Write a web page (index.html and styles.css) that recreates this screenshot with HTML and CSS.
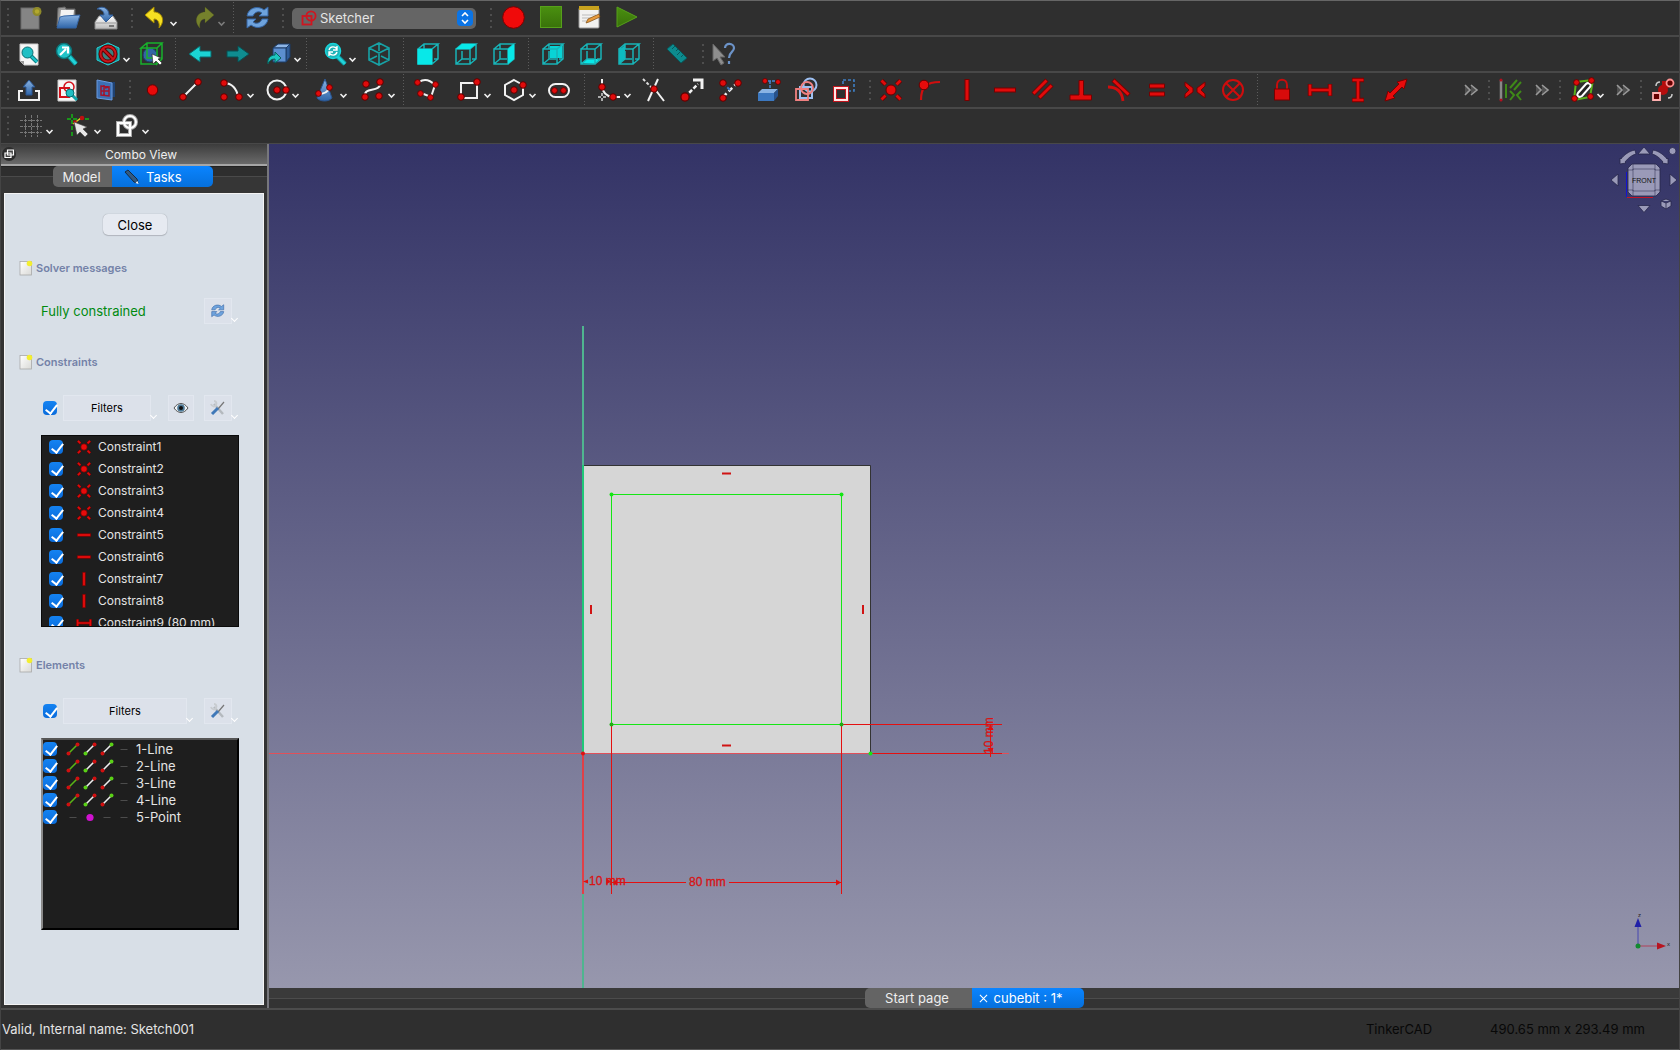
FILE: index.html
```html
<!DOCTYPE html>
<html lang="en">
<head>
<meta charset="utf-8">
<title>cubebit : 1* – Sketcher</title>
<link rel="stylesheet" href="styles.css">
</head>
<body>
<svg class="symbols" aria-hidden="true">
  <defs>
    <linearGradient id="g-blue" x1="0" y1="0" x2="0" y2="1"><stop offset="0" stop-color="#8ab4e4"/><stop offset="1" stop-color="#2f65a8"/></linearGradient>
    <linearGradient id="g-grey" x1="0" y1="0" x2="0" y2="1"><stop offset="0" stop-color="#fff"/><stop offset="1" stop-color="#b9b9b9"/></linearGradient>
    <linearGradient id="g-page" x1="0" y1="0" x2="1" y2="1"><stop offset="0" stop-color="#fff"/><stop offset="1" stop-color="#d9d9d6"/></linearGradient>
    <linearGradient id="g-green" x1="0" y1="0" x2="0" y2="1"><stop offset="0" stop-color="#4a9010"/><stop offset="1" stop-color="#39720a"/></linearGradient>
  </defs>
  <symbol id="node" viewBox="0 0 8 8"><circle cx="4" cy="4" r="3.3" fill="#e00b0b" stroke="#5c0000"/></symbol>
  <symbol id="chev" viewBox="0 0 9 9"><path d="M1.500 3l3 3 3-3" fill="none" stroke="#eee" stroke-width="1.600"/></symbol>
  <symbol id="i-new" viewBox="0 0 28 28"><rect x="4" y="4" width="18" height="21" fill="#858585" stroke="#6c6c6c"/><circle cx="20" cy="7.500" r="4.500" fill="#8f8a2a"/><circle cx="20" cy="7.500" r="2.200" fill="#b3a92f"/></symbol>
  <symbol id="i-open" viewBox="0 0 28 28"><path d="M2 22L3 4l7-1 1 2h9v14z" fill="#9a9a9a" stroke="#666"/><path d="M6 6h13l-1 8H5z" fill="#f3f3f3"/><path d="M5 13l4-1 16-1-4 13H2z" fill="url(#g-blue)" stroke="#3565a4"/></symbol>
  <symbol id="i-save" viewBox="0 0 28 28"><path d="M6 12h14l4 6v7H2v-7z" fill="url(#g-grey)" stroke="#888"/><path d="M3 19h20" stroke="#999"/><path d="M16 22h5" stroke="#777" stroke-width="2"/><path d="M4 5c5-4 12-1 12 6h4l-7 7-6-7h4c0-4-3-6-7-6z" fill="url(#g-blue)" stroke="#2f5c99"/></symbol>
  <symbol id="i-undo" viewBox="0 0 28 28"><path d="M4 11l9-8v5c8 0 12 9 5 16 1-5-1-9-5-9v4z" fill="#f5df22" stroke="#a58a00"/></symbol>
  <symbol id="i-redo" viewBox="0 0 28 28"><path d="M25 11l-9-8v5c-8 0-12 9-5 16-1-5 1-9 5-9v4z" fill="#75812c" stroke="#505a18"/></symbol>
  <symbol id="i-refresh" viewBox="0 0 28 28"><path d="M3 12c1-8 11-11 17-6l4-3v9h-9l3-3c-4-3-8 0-9 3z" fill="#6ea3dd" stroke="#3465a4"/><path d="M24 15c-1 8-11 11-17 6l-4 3v-9h9l-3 3c4 3 8 0 9-3z" fill="#6ea3dd" stroke="#3465a4"/></symbol>
  <symbol id="i-sketcher" viewBox="0 0 16 16"><rect x="1.500" y="6" width="9" height="8.500" fill="none" stroke="#cf1620" stroke-width="1.800"/><circle cx="10" cy="6" r="4.600" fill="none" stroke="#cf1620" stroke-width="1.800"/></symbol>
  <symbol id="i-rec" viewBox="0 0 28 28"><circle cx="13.500" cy="13.500" r="10.800" fill="#f00a0a" stroke="#7a0000"/></symbol>
  <symbol id="i-stop" viewBox="0 0 28 28"><rect x="2.500" y="2.500" width="21" height="21" fill="url(#g-green)" stroke="#56a01a"/></symbol>
  <symbol id="i-macro" viewBox="0 0 28 28"><rect x="3" y="4" width="20" height="20" rx="1" fill="#f2f2f0" stroke="#999"/><rect x="3" y="2" width="20" height="4" fill="#c7a21e"/><path d="M6 11h14M6 14h11M6 17h6" stroke="#bbb"/><path d="M10 19l2-4 11-5 1 3-11 5z" fill="#e79a3c" stroke="#7a4a10" stroke-width=".7"/></symbol>
  <symbol id="i-play" viewBox="0 0 28 28"><path d="M3 3l20 10L3 23z" fill="url(#g-green)" stroke="#56a01a"/></symbol>

  <symbol id="i-fitall" viewBox="0 0 28 28"><path d="M5 4h18v21H9l-4-4z" fill="#f6f6f6" stroke="#ccc"/><path d="M5 21h4v4z" fill="#999"/><path d="M15 15l7 7" stroke="#0b7f84" stroke-width="4"/><path d="M15 15l7 7" stroke="#1cc6cc" stroke-width="2"/><circle cx="12.500" cy="12.500" r="5.500" fill="#20bfc4" stroke="#0a6e72"/></symbol>
  <symbol id="i-fitsel" viewBox="0 0 28 28"><path d="M15 15l8 9" stroke="#0b8a90" stroke-width="5"/><path d="M15 15l8 9" stroke="#22d3d9" stroke-width="3"/><circle cx="11" cy="11" r="7.500" fill="#1fc3c8" stroke="#0a7478" stroke-width="1.500"/><path d="M7 15l6-6M9 7.500h6v6" stroke="#fff" stroke-width="2.200" fill="none"/></symbol>
  <symbol id="i-draw" viewBox="0 0 28 28"><path d="M14 3l11 5v12l-11 5-11-5V8z" fill="#148e92" stroke="#25d4da"/><circle cx="14" cy="14" r="7.500" fill="#3b8080" stroke="#600" stroke-width="4"/><path d="M9 9l10 10" stroke="#600" stroke-width="4"/><circle cx="14" cy="14" r="7.500" fill="none" stroke="#c8161c" stroke-width="2"/><path d="M9 9l10 10" stroke="#c8161c" stroke-width="2"/></symbol>
  <symbol id="i-selbox" viewBox="0 0 28 28"><circle cx="13" cy="15" r="7" fill="#3465a4" stroke="#1d3d68"/><path d="M4 8l6-5h15l-5 5zM20 8v16l5-5V3M4 8v16h16M10 3v15h15" fill="none" stroke="#19b12c" stroke-width="1.500"/><path d="M15 14l1 10 3-3 4 4 2-2-4-4 3-1z" fill="#fff" stroke="#222" stroke-width=".6"/></symbol>
  <symbol id="i-left" viewBox="0 0 28 28"><path d="M3 14L14 6v5h11v6H14v5z" fill="#1bd4d4" stroke="#0a6b6e"/></symbol>
  <symbol id="i-right" viewBox="0 0 28 28"><path d="M25 14L14 6v5H3v6h11v5z" fill="#0f8d90" stroke="#075053"/></symbol>
  <symbol id="i-link" viewBox="0 0 28 28"><path d="M8 8l5-4h12l-4 4z" fill="#8db5e6" stroke="#1d3d68"/><path d="M21 8l4-4v13l-4 5z" fill="#2f5c99" stroke="#1d3d68"/><path d="M8 8h13v14H8z" fill="#5c8fd0" stroke="#1d3d68"/><path d="M3 24c-1-6 3-9 7-9v-3l6 6-6 5v-4c-4 0-6 2-7 5z" fill="#1cc6c0" stroke="#07605c"/></symbol>
  <symbol id="i-sync" viewBox="0 0 28 28"><path d="M17 16l8 8" stroke="#0b8a90" stroke-width="5"/><path d="M17 16l8 8" stroke="#22d3d9" stroke-width="3"/><circle cx="13" cy="11" r="7.500" fill="#1fb3b8" stroke="#16d4da" stroke-width="1.500"/><path d="M9 10c1-4 6-4 8-1M17 6v4h-4M17 12c-1 4-6 4-8 1M9 16v-4h4" stroke="#fff" stroke-width="1.400" fill="none"/></symbol>
  <symbol id="i-iso" viewBox="0 0 28 28"><path d="M14 3l10 5v12l-10 5-10-5V8zM4 8l10 5 10-5M14 13v12M14 3v8M4 20l8-4M24 20l-8-4" fill="none" stroke="#17a2a6" stroke-width="1.600"/></symbol>
  <symbol id="cube" viewBox="0 0 28 28"><path d="M4 9h14v15H4zM4 9l6-5h14l-6 5M18 24l6-5V4M10 4v5M10 11v8l-6 5M10 19h7M20 19h4" fill="none" stroke="#18b4b8" stroke-width="1.500"/></symbol>
  <symbol id="i-front" viewBox="0 0 28 28"><use href="#cube"/><path d="M3.500 9h14.500v15.500H3.500z" fill="#08e8e8"/></symbol>
  <symbol id="i-top" viewBox="0 0 28 28"><use href="#cube"/><path d="M4 9l6-5h14l-6 5z" fill="#08e8e8"/></symbol>
  <symbol id="i-rightv" viewBox="0 0 28 28"><use href="#cube"/><path d="M18 9l6-5v15l-6 5z" fill="#08e8e8"/></symbol>
  <symbol id="i-rear" viewBox="0 0 28 28"><path d="M11 6h12v12H11z" fill="#08d4d6"/><use href="#cube"/></symbol>
  <symbol id="i-bottom" viewBox="0 0 28 28"><path d="M5 23l5-4h13l-5 5z" fill="#08e8e8"/><use href="#cube"/></symbol>
  <symbol id="i-leftv" viewBox="0 0 28 28"><path d="M4 10l6-5v14l-6 5z" fill="#0cbcc0"/><use href="#cube"/></symbol>
  <symbol id="i-ruler" viewBox="0 0 28 28"><path d="M3 9l6-5 14 14-6 5z" fill="#0d8b8e" stroke="#06595c"/><path d="M11 6l-3 3M14 9l-2 2M16 12l-3 3M19 15l-2 2" stroke="#06595c"/></symbol>
  <symbol id="i-what" viewBox="0 0 28 28"><path d="M3 4v17l4-3 4 7 3-2-4-6h5z" fill="#8e8e8e" stroke="#666"/><path d="M15 8c0-6 9-5 9 0 0 4-5 4-5 10M19 21v3" fill="none" stroke="#6c93c8" stroke-width="2.200"/></symbol>

  <symbol id="i-leave" viewBox="0 0 28 28"><path d="M8 15H4v9h20v-9h-4" fill="none" stroke="#f1f1f1" stroke-width="2"/><path d="M14 4l6 7h-3v8h-6v-8H8z" fill="url(#g-blue)" stroke="#2a5590"/></symbol>
  <symbol id="i-viewsk" viewBox="0 0 28 28"><path d="M5 4h18v21H5z" fill="#f6f6f6" stroke="#ccc"/><path d="M7 12h9v9H7z" fill="none" stroke="#d3101a" stroke-width="2"/><circle cx="16" cy="11" r="5" fill="none" stroke="#d3101a" stroke-width="1.500"/><path d="M19 19l5 5" stroke="#0fa5aa" stroke-width="3"/><circle cx="17" cy="17" r="4" fill="#20bfc4" stroke="#0a6e72"/></symbol>
  <symbol id="i-viewsec" viewBox="0 0 28 28"><path d="M20 6h4v15h-3" fill="#1f4273"/><path d="M6 4l15 3v17L6 22z" fill="#3d70b4" stroke="#6b9be0"/><path d="M10 10l8 1v9l-8-1zM13 9v11M10 15h8M14 12l4-1v8" fill="none" stroke="#a3142c" stroke-width="1.500"/></symbol>
  <symbol id="i-point" viewBox="0 0 28 28"><circle cx="13.500" cy="14" r="5.200" fill="#e80a0a" stroke="#6a0000"/></symbol>
  <symbol id="i-line" viewBox="0 0 28 28"><path d="M6 21L20 7" stroke="#f2f2f2" stroke-width="2"/><use href="#node" x="2" y="17" width="8" height="8"/><use href="#node" x="17" y="2" width="8" height="8"/></symbol>
  <symbol id="i-arc" viewBox="0 0 28 28"><path d="M6 7c8 0 13 6 14 14" fill="none" stroke="#f2f2f2" stroke-width="2"/><use href="#node" x="2" y="3" width="8" height="8"/><use href="#node" x="17" y="17" width="8" height="8"/><use href="#node" x="2" y="17" width="8" height="8"/></symbol>
  <symbol id="i-circle" viewBox="0 0 28 28"><circle cx="14" cy="14" r="9.500" fill="none" stroke="#f2f2f2" stroke-width="2"/><use href="#node" x="10" y="10" width="8" height="8"/><use href="#node" x="19" y="10" width="8" height="8"/></symbol>
  <symbol id="i-conic" viewBox="0 0 28 28"><path d="M14 3l7 19c-3 4-12 4-15 0z" fill="url(#g-blue)" stroke="#2a5590"/><path d="M7 18c6 0 10-2 11-6" stroke="#f2f2f2" stroke-width="2" fill="none"/><use href="#node" x="4" y="14" width="7" height="7"/><use href="#node" x="15" y="8" width="7" height="7"/></symbol>
  <symbol id="i-bspline" viewBox="0 0 28 28"><path d="M6 20c-1-10 15-2 16-14" fill="none" stroke="#f2f2f2" stroke-width="2"/><use href="#node" x="3" y="4" width="8" height="8"/><use href="#node" x="17" y="2" width="8" height="8"/><use href="#node" x="2" y="17" width="8" height="8"/><use href="#node" x="16" y="16" width="8" height="8"/></symbol>
  <symbol id="i-poly" viewBox="0 0 28 28"><path d="M5 6c6-4 11-2 16 3l-4 12-10-4" fill="none" stroke="#f2f2f2" stroke-width="2"/><use href="#node" x="0" y="3" width="7" height="7"/><use href="#node" x="18" y="5" width="7" height="7"/><use href="#node" x="3" y="14" width="7" height="7"/><use href="#node" x="13" y="18" width="7" height="7"/></symbol>
  <symbol id="i-rect" viewBox="0 0 28 28"><path d="M6 7h16v15H6z" fill="none" stroke="#f2f2f2" stroke-width="2"/><use href="#node" x="2" y="17" width="8" height="8"/><use href="#node" x="18" y="2" width="8" height="8"/></symbol>
  <symbol id="i-hex" viewBox="0 0 28 28"><path d="M14 4l9 5v10l-9 5-9-5V9z" fill="none" stroke="#f2f2f2" stroke-width="2"/><use href="#node" x="10" y="10" width="8" height="8"/><use href="#node" x="19" y="5" width="8" height="8"/></symbol>
  <symbol id="i-slot" viewBox="0 0 28 28"><rect x="3" y="8" width="20" height="13" rx="6.500" fill="none" stroke="#f2f2f2" stroke-width="2"/><use href="#node" x="5" y="11" width="7" height="7"/><use href="#node" x="14" y="11" width="7" height="7"/></symbol>
  <symbol id="i-fillet" viewBox="0 0 28 28"><path d="M7 3v8c1 6 5 9 10 10h8" fill="none" stroke="#f2f2f2" stroke-width="2"/><path d="M7 17v8M3 21h9" stroke="#aaa" stroke-width="2" stroke-dasharray="3 2"/><use href="#node" x="3" y="7" width="8" height="8"/><use href="#node" x="14" y="17" width="8" height="8"/></symbol>
  <symbol id="i-trim" viewBox="0 0 28 28"><path d="M2 3l9 9" stroke="#ddd" stroke-width="2" stroke-dasharray="3 2"/><path d="M13 12l10 13M17 3L7 25" stroke="#f2f2f2" stroke-width="2"/><use href="#node" x="9" y="9" width="8" height="8"/></symbol>
  <symbol id="i-extend" viewBox="0 0 28 28"><path d="M6 21L19 8" stroke="#f2f2f2" stroke-width="2.500" stroke-dasharray="4 2"/><path d="M14 4h9v9" fill="none" stroke="#f2f2f2" stroke-width="3"/><use href="#node" x="1" y="16" width="10" height="10"/></symbol>
  <symbol id="i-split" viewBox="0 0 28 28"><path d="M6 21L20 7" stroke="#f2f2f2" stroke-width="2.500" stroke-dasharray="5 3"/><path d="M6 7l7 7" stroke="#3f74b8" stroke-width="2" stroke-dasharray="4 2"/><use href="#node" x="2" y="3" width="8" height="8"/><use href="#node" x="17" y="3" width="8" height="8"/><use href="#node" x="2" y="18" width="8" height="8"/></symbol>
  <symbol id="i-ext" viewBox="0 0 28 28"><path d="M9 5h13M15 5v9" stroke="#4a86cf" stroke-width="1.500" stroke-dasharray="3 1"/><use href="#node" x="7" y="2" width="6" height="6"/><use href="#node" x="20" y="3" width="6" height="6"/><path d="M3 17l4-4h16l-4 4z" fill="#8ab4e4"/><path d="M19 17l4-4v7l-4 5z" fill="#27528c"/><path d="M3 17h16v8H3z" fill="#3c78c0"/></symbol>
  <symbol id="i-carbon" viewBox="0 0 28 28"><g fill="none" stroke="#9ec0f2" stroke-width="2"><circle cx="17" cy="9" r="6.500"/><path d="M7 11h12v11H7z"/></g><g fill="none" stroke="#f08080" stroke-width="1.800"><circle cx="14" cy="12" r="6"/><path d="M3 13h12v11H3z"/></g></symbol>
  <symbol id="i-constr" viewBox="0 0 28 28"><path d="M12 4h11v11H12z" fill="none" stroke="#3f7fc4" stroke-width="1.600" stroke-dasharray="3 2"/><path d="M4 12h12v12H4z" fill="#2f2f2f" stroke="#c0141c" stroke-width="4"/><path d="M4 12h12v12H4z" fill="none" stroke="#ffe6e6" stroke-width="2"/></symbol>

  <symbol id="c-coin" viewBox="0 0 28 28"><path d="M4.500 4.500l4 4M23.500 4.500l-4 4M4.500 23.500l4-4M23.500 23.500l-4-4" stroke="#600" stroke-width="4.500"/><path d="M4.500 4.500l4 4M23.500 4.500l-4 4M4.500 23.500l4-4M23.500 23.500l-4-4" stroke="#e00b0b" stroke-width="2.800"/><circle cx="14" cy="14" r="5" fill="#e80b0b" stroke="#600"/></symbol>
  <symbol id="c-ponobj" viewBox="0 0 28 28"><path d="M6 24c0-13 5-18 19-18" fill="none" stroke="#cf0f0f" stroke-width="2.200"/><circle cx="9" cy="9" r="4.800" fill="#e80b0b" stroke="#600"/></symbol>
  <symbol id="c-vert" viewBox="0 0 28 28"><rect x="12" y="3.500" width="4" height="21" fill="#e00b0b" stroke="#700"/></symbol>
  <symbol id="c-horiz" viewBox="0 0 28 28"><rect x="3.500" y="12" width="21" height="4" fill="#e00b0b" stroke="#700"/></symbol>
  <symbol id="c-par" viewBox="0 0 28 28"><path d="M4 18L18 4M10 22l13-13" stroke="#700" stroke-width="4.500"/><path d="M4.500 17.500l13-13M10.500 21.500l12-12" stroke="#e00b0b" stroke-width="2.800"/></symbol>
  <symbol id="c-perp" viewBox="0 0 28 28"><path d="M12 4.500h4.500V19h8v5H3v-5h9z" fill="#e00b0b" stroke="#700"/></symbol>
  <symbol id="c-tan" viewBox="0 0 28 28"><path d="M8 4l16 15" stroke="#700" stroke-width="4.500"/><path d="M8.500 4.500l15 14" stroke="#e00b0b" stroke-width="2.800"/><path d="M3 11c9 0 14 5 15 14" fill="none" stroke="#d00d0d" stroke-width="2.800"/></symbol>
  <symbol id="c-eq" viewBox="0 0 28 28"><path d="M6.500 8h15v4h-15zM6.500 16h15v4h-15z" fill="#e00b0b" stroke="#700"/></symbol>
  <symbol id="c-sym" viewBox="0 0 28 28"><path d="M4 6v4l4 4-4 4v4l8-6v-4zM24 6v4l-4 4 4 4v4l-8-6v-4z" fill="#e00b0b" stroke="#700"/></symbol>
  <symbol id="c-block" viewBox="0 0 28 28"><circle cx="14" cy="14" r="10" fill="none" stroke="#d00d0d" stroke-width="2"/><path d="M7 7l14 14M21 7L7 21" stroke="#d00d0d" stroke-width="2"/></symbol>
  <symbol id="c-lock" viewBox="0 0 28 28"><path d="M9 13V9c0-7 10-7 10 0v4" fill="none" stroke="#c80d0d" stroke-width="2"/><rect x="6.500" y="13" width="15" height="11" fill="#d80b0b" stroke="#700"/></symbol>
  <symbol id="c-hd" viewBox="0 0 28 28"><path d="M4 8v12M24 8v12M4 14h20" stroke="#700" stroke-width="4.500"/><path d="M4 8.500v11M24 8.500v11M4 14h20" stroke="#e00b0b" stroke-width="2.600"/></symbol>
  <symbol id="c-vd" viewBox="0 0 28 28"><path d="M8 4h12M8 24h12M14 4v20" stroke="#700" stroke-width="4.500"/><path d="M8.500 4h11M8.500 24h11M14 4v20" stroke="#e00b0b" stroke-width="2.600"/></symbol>
  <symbol id="c-dist" viewBox="0 0 28 28"><path d="M25 3l-3 10-2-2-9 9 2 2-10 3 3-10 2 2 9-9-2-2z" fill="#e80b0b" stroke="#700"/></symbol>
  <symbol id="i-tog" viewBox="0 0 28 28"><path d="M4 4v20" stroke="#888" stroke-width="2.500"/><circle cx="4" cy="4" r="1.500" fill="#b01020"/><circle cx="4" cy="24" r="1.500" fill="#b01020"/><path d="M9 8v14M13 12l7-8M17 14l7-8M13 15l4 4-4 5M24 15l-4 4 4 5" fill="none" stroke="#3f8a18" stroke-width="2"/></symbol>
  <symbol id="i-bsp" viewBox="0 0 28 28"><path d="M8 6l17-2-3 17-16 3z" fill="none" stroke="#5bb01c" stroke-width="2"/><path d="M10 17l8-9c2-2 6 0 4 3l-8 9c-3 2-6 0-4-3z" fill="#222" stroke="#fff" stroke-width="2"/><use href="#node" x="5" y="3" width="7" height="7"/><use href="#node" x="20" y="1" width="7" height="7"/><use href="#node" x="3" y="19" width="7" height="7"/><use href="#node" x="19" y="17" width="7" height="7"/></symbol>
  <symbol id="i-virt" viewBox="0 0 28 28"><circle cx="14" cy="14" r="5" fill="#b50d0d"/><path d="M13 5h7v7h-7z" fill="#b50d0d"/><circle cx="21" cy="7" r="3.500" fill="#600" stroke="#ff9090" stroke-width="1.800"/><path d="M4 17h7v7H4z" fill="#600" stroke="#ffb0b0" stroke-width="1.800"/><path d="M7 10c0-3 1-4 4-4M23 18c0 3-1 4-4 4" stroke="#ccc" fill="none" stroke-width="1.500"/></symbol>
  <symbol id="i-more" viewBox="0 0 16 14"><path d="M2 2l5 5-5 5M8 2l6 5-6 5" fill="#505050" stroke="#9a9a9a" stroke-width="1.600"/></symbol>
  <symbol id="i-grid" viewBox="0 0 28 28"><path d="M8.500 3v22M14.500 3v22M20.500 3v22M3 8.500h22M3 14.500h22M3 20.500h22" stroke="#777" stroke-width="1" stroke-dasharray="3 1" fill="none"/></symbol>
  <symbol id="i-snap" viewBox="0 0 28 28"><path d="M7 2v23M2 7h23" stroke="#14b814" stroke-width="1.500" stroke-dasharray="4 2"/><path d="M8 12l8-6" stroke="#d9d020" stroke-width="1.500"/><circle cx="17" cy="6" r="2.300" fill="#c01010"/><circle cx="10" cy="10" r="1.800" fill="#c01010"/><path d="M9 10l3 13 3-3 5 5 3-3-5-5 4-2z" fill="#e6e6e6" stroke="#444" stroke-width=".6"/></symbol>
  <symbol id="i-order" viewBox="0 0 28 28"><g fill="none" stroke="#a9a9a9" stroke-width="4"><circle cx="17" cy="10" r="6"/><path d="M5 11h12v12H5z"/></g><g fill="none" stroke="#fff" stroke-width="2"><circle cx="17" cy="10" r="6"/><path d="M5 11h12v12H5z"/></g></symbol>

  <symbol id="t-pencil" viewBox="0 0 16 16"><path d="M1 3l3-2 9 9 1 4-4-1z" fill="#345a80" stroke="#152a40"/><path d="M11.500 14l3 1-1-3z" fill="#fff"/></symbol>
  <symbol id="t-page" viewBox="0 0 14 16"><rect x="1" y="1.500" width="11.500" height="13.500" fill="url(#g-page)" stroke="#a8a8a8" stroke-width=".8"/><circle cx="10.500" cy="3.500" r="2.800" fill="#f3ee30"/></symbol>
  <symbol id="t-eye" viewBox="0 0 16 16"><path d="M1 8c4-6 10-6 14 0-4 6-10 6-14 0z" fill="#f2f4f6" stroke="#555"/><circle cx="8" cy="8" r="3.800" fill="#4c7896"/><circle cx="8" cy="8" r="2" fill="#111"/></symbol>
  <symbol id="t-tools" viewBox="0 0 16 16"><path d="M4 4l9 10" stroke="#b4b9be" stroke-width="2.500"/><path d="M1 4c1 3 4 3 5 1s0-4-2-4" fill="none" stroke="#c8ccd0" stroke-width="2"/><path d="M14 2L8 9" stroke="#777" stroke-width="1.200"/><path d="M8 8l-6 6" stroke="#3f78b8" stroke-width="3"/></symbol>
  <symbol id="e-edge" viewBox="0 0 14 14"><path d="M3 11l8-8" stroke="#5ab416" stroke-width="1.600"/><circle cx="2.500" cy="11.500" r="2" fill="#d01010"/><circle cx="11.500" cy="2.500" r="2" fill="#d01010"/></symbol>
  <symbol id="e-start" viewBox="0 0 14 14"><path d="M3 11l8-8" stroke="#eee" stroke-width="1.600"/><circle cx="2.500" cy="11.500" r="2" fill="#5ad016"/><circle cx="11.500" cy="2.500" r="2" fill="#d01010"/></symbol>
  <symbol id="e-end" viewBox="0 0 14 14"><path d="M3 11l8-8" stroke="#eee" stroke-width="1.600"/><circle cx="2.500" cy="11.500" r="2" fill="#d01010"/><circle cx="11.500" cy="2.500" r="2" fill="#5ad016"/></symbol>
  <symbol id="e-none" viewBox="0 0 14 14"><path d="M3.500 7.500h7" stroke="#4c4c4c"/></symbol>
  <symbol id="e-point" viewBox="0 0 14 14"><circle cx="7" cy="7.500" r="3.600" fill="#d012d0"/></symbol>
</svg>

<div class="app">
  <header class="toolbars">
    <div class="bar">
      <i class="grip"></i>
      <button class="tool" aria-label="New"><svg><use href="#i-new"/></svg></button>
      <button class="tool" aria-label="Open"><svg><use href="#i-open"/></svg></button>
      <button class="tool" aria-label="Save"><svg><use href="#i-save"/></svg></button>
      <i class="grip"></i>
      <button class="tool drop" aria-label="Undo"><svg><use href="#i-undo"/></svg><svg class="chev"><use href="#chev"/></svg></button>
      <button class="tool drop dim" aria-label="Redo"><svg><use href="#i-redo"/></svg><svg class="chev"><use href="#chev"/></svg></button>
      <i class="sep"></i>
      <button class="tool" aria-label="Refresh"><svg><use href="#i-refresh"/></svg></button>
      <i class="grip"></i>
      <label class="workbench"><svg><use href="#i-sketcher"/></svg><select aria-label="Workbench"><option>Sketcher</option></select>
        <svg class="updown" viewBox="0 0 16 16"><path d="M5 6l3-3 3 3M5 10l3 3 3-3" fill="none" stroke="#fff" stroke-width="1.600"/></svg></label>
      <i class="grip gap"></i>
      <button class="tool" aria-label="Record macro"><svg><use href="#i-rec"/></svg></button>
      <button class="tool" aria-label="Stop macro"><svg><use href="#i-stop"/></svg></button>
      <button class="tool" aria-label="Macros"><svg><use href="#i-macro"/></svg></button>
      <button class="tool" aria-label="Run macro"><svg><use href="#i-play"/></svg></button>
    </div>
    <div class="bar">
      <i class="grip"></i>
      <button class="tool tight" aria-label="Fit all"><svg><use href="#i-fitall"/></svg></button>
      <button class="tool" aria-label="Fit selection"><svg><use href="#i-fitsel"/></svg></button>
      <button class="tool drop lead" aria-label="Draw style"><svg><use href="#i-draw"/></svg><svg class="chev"><use href="#chev"/></svg></button>
      <button class="tool tight" aria-label="Bounding box"><svg><use href="#i-selbox"/></svg></button>
      <i class="sep"></i>
      <button class="tool" aria-label="Back"><svg><use href="#i-left"/></svg></button>
      <button class="tool" aria-label="Forward"><svg><use href="#i-right"/></svg></button>
      <button class="tool drop lead" aria-label="Go to linked object"><svg><use href="#i-link"/></svg><svg class="chev"><use href="#chev"/></svg></button>
      <i class="sep"></i>
      <button class="tool drop lead" aria-label="Sync view"><svg><use href="#i-sync"/></svg><svg class="chev"><use href="#chev"/></svg></button>
      <button class="tool" aria-label="Isometric"><svg><use href="#i-iso"/></svg></button>
      <i class="sep"></i>
      <button class="tool" aria-label="Front"><svg><use href="#i-front"/></svg></button>
      <button class="tool" aria-label="Top"><svg><use href="#i-top"/></svg></button>
      <button class="tool" aria-label="Right"><svg><use href="#i-rightv"/></svg></button>
      <i class="sep"></i>
      <button class="tool" aria-label="Rear"><svg><use href="#i-rear"/></svg></button>
      <button class="tool" aria-label="Bottom"><svg><use href="#i-bottom"/></svg></button>
      <button class="tool" aria-label="Left"><svg><use href="#i-leftv"/></svg></button>
      <i class="sep"></i>
      <button class="tool" aria-label="Measure"><svg><use href="#i-ruler"/></svg></button>
      <i class="grip"></i>
      <button class="tool tight" aria-label="What's this?"><svg><use href="#i-what"/></svg></button>
    </div>
    <div class="bar">
      <i class="grip"></i>
      <button class="tool tight" aria-label="Leave sketch"><svg><use href="#i-leave"/></svg></button>
      <button class="tool" aria-label="View sketch"><svg><use href="#i-viewsk"/></svg></button>
      <button class="tool" aria-label="View section"><svg><use href="#i-viewsec"/></svg></button>
      <i class="grip"></i>
      <button class="tool" aria-label="Point"><svg><use href="#i-point"/></svg></button>
      <button class="tool" aria-label="Line"><svg><use href="#i-line"/></svg></button>
      <button class="tool drop lead" aria-label="Arc"><svg><use href="#i-arc"/></svg><svg class="chev"><use href="#chev"/></svg></button>
      <button class="tool drop" aria-label="Circle"><svg><use href="#i-circle"/></svg><svg class="chev"><use href="#chev"/></svg></button>
      <button class="tool drop" aria-label="Conic"><svg><use href="#i-conic"/></svg><svg class="chev"><use href="#chev"/></svg></button>
      <button class="tool drop" aria-label="B-spline"><svg><use href="#i-bspline"/></svg><svg class="chev"><use href="#chev"/></svg></button>
      <i class="sep"></i>
      <button class="tool" aria-label="Polyline"><svg><use href="#i-poly"/></svg></button>
      <button class="tool drop lead" aria-label="Rectangle"><svg><use href="#i-rect"/></svg><svg class="chev"><use href="#chev"/></svg></button>
      <button class="tool drop" aria-label="Polygon"><svg><use href="#i-hex"/></svg><svg class="chev"><use href="#chev"/></svg></button>
      <button class="tool tight" aria-label="Slot"><svg><use href="#i-slot"/></svg></button>
      <i class="sep"></i>
      <button class="tool drop" aria-label="Fillet"><svg><use href="#i-fillet"/></svg><svg class="chev"><use href="#chev"/></svg></button>
      <button class="tool tight" aria-label="Trim"><svg><use href="#i-trim"/></svg></button>
      <button class="tool" aria-label="Extend"><svg><use href="#i-extend"/></svg></button>
      <button class="tool" aria-label="Split"><svg><use href="#i-split"/></svg></button>
      <button class="tool" aria-label="External geometry"><svg><use href="#i-ext"/></svg></button>
      <button class="tool" aria-label="Carbon copy"><svg><use href="#i-carbon"/></svg></button>
      <button class="tool" aria-label="Construction geometry"><svg><use href="#i-constr"/></svg></button>
      <i class="grip"></i>
      <button class="tool tight" aria-label="Coincident"><svg><use href="#c-coin"/></svg></button>
      <button class="tool" aria-label="Point on object"><svg><use href="#c-ponobj"/></svg></button>
      <button class="tool" aria-label="Vertical"><svg><use href="#c-vert"/></svg></button>
      <button class="tool" aria-label="Horizontal"><svg><use href="#c-horiz"/></svg></button>
      <button class="tool" aria-label="Parallel"><svg><use href="#c-par"/></svg></button>
      <button class="tool" aria-label="Perpendicular"><svg><use href="#c-perp"/></svg></button>
      <button class="tool" aria-label="Tangent"><svg><use href="#c-tan"/></svg></button>
      <button class="tool" aria-label="Equal"><svg><use href="#c-eq"/></svg></button>
      <button class="tool" aria-label="Symmetric"><svg><use href="#c-sym"/></svg></button>
      <button class="tool" aria-label="Block"><svg><use href="#c-block"/></svg></button>
      <i class="sep"></i>
      <button class="tool" aria-label="Lock"><svg><use href="#c-lock"/></svg></button>
      <button class="tool" aria-label="Horizontal distance"><svg><use href="#c-hd"/></svg></button>
      <button class="tool" aria-label="Vertical distance"><svg><use href="#c-vd"/></svg></button>
      <button class="tool" aria-label="Distance"><svg><use href="#c-dist"/></svg></button>
      <div class="bar-end">
        <button class="more" aria-label="More constraints"><svg><use href="#i-more"/></svg></button>
        <i class="grip"></i>
        <button class="tool" aria-label="Toggle constraints"><svg><use href="#i-tog"/></svg></button>
        <button class="more" aria-label="More tools"><svg><use href="#i-more"/></svg></button>
        <i class="grip"></i>
        <button class="tool drop" aria-label="B-spline info"><svg><use href="#i-bsp"/></svg><svg class="chev"><use href="#chev"/></svg></button>
        <button class="more" aria-label="More B-spline tools"><svg><use href="#i-more"/></svg></button>
        <i class="grip"></i>
        <button class="tool" aria-label="Switch virtual space"><svg><use href="#i-virt"/></svg></button>
      </div>
    </div>
    <div class="bar">
      <i class="grip"></i>
      <button class="tool drop" aria-label="Grid"><svg><use href="#i-grid"/></svg><svg class="chev"><use href="#chev"/></svg></button>
      <button class="tool drop" aria-label="Snap"><svg><use href="#i-snap"/></svg><svg class="chev"><use href="#chev"/></svg></button>
      <button class="tool drop" aria-label="Rendering order"><svg><use href="#i-order"/></svg><svg class="chev"><use href="#chev"/></svg></button>
    </div>
  </header>

  <main class="work">
    <aside class="dock">
      <div class="dock-head">
        <button class="float" aria-label="Float"><svg viewBox="0 0 12 12"><path d="M4.500 2h6v5h-6zM2 5h6v4.500H2z" fill="#444" stroke="#fff" stroke-width="1.200"/></svg></button>
        <h1>Combo View</h1>
      </div>
      <div class="dock-tabs">
        <button class="seg">Model</button>
        <button class="seg on tasks"><svg><use href="#t-pencil"/></svg>Tasks</button>
      </div>
      <div class="panel">
        <button class="close">Close</button>
        <section>
          <h2><svg><use href="#t-page"/></svg>Solver messages</h2>
          <div class="row">
            <span class="state">Fully constrained</span>
            <button class="flat sq menu" aria-label="Update"><svg><use href="#i-refresh"/></svg></button>
          </div>
        </section>
        <section>
          <h2><svg><use href="#t-page"/></svg>Constraints</h2>
          <div class="row">
            <input type="checkbox" class="check" checked aria-label="Filter constraints">
            <button class="flat wide menu">Filters</button>
            <button class="flat eye" aria-label="Show or hide"><svg><use href="#t-eye"/></svg></button>
            <button class="flat sq menu" aria-label="Settings"><svg><use href="#t-tools"/></svg></button>
          </div>
          <ul class="list constraints">
            <li><label><input type="checkbox" class="check" checked><svg><use href="#c-coin"/></svg>Constraint1</label></li>
            <li><label><input type="checkbox" class="check" checked><svg><use href="#c-coin"/></svg>Constraint2</label></li>
            <li><label><input type="checkbox" class="check" checked><svg><use href="#c-coin"/></svg>Constraint3</label></li>
            <li><label><input type="checkbox" class="check" checked><svg><use href="#c-coin"/></svg>Constraint4</label></li>
            <li><label><input type="checkbox" class="check" checked><svg><use href="#c-horiz"/></svg>Constraint5</label></li>
            <li><label><input type="checkbox" class="check" checked><svg><use href="#c-horiz"/></svg>Constraint6</label></li>
            <li><label><input type="checkbox" class="check" checked><svg><use href="#c-vert"/></svg>Constraint7</label></li>
            <li><label><input type="checkbox" class="check" checked><svg><use href="#c-vert"/></svg>Constraint8</label></li>
            <li><label><input type="checkbox" class="check" checked><svg><use href="#c-hd"/></svg>Constraint9 (80 mm)</label></li>
          </ul>
        </section>
        <section>
          <h2><svg><use href="#t-page"/></svg>Elements</h2>
          <div class="row">
            <input type="checkbox" class="check" checked aria-label="Filter elements">
            <button class="flat wide menu">Filters</button>
            <button class="flat sq menu" aria-label="Settings"><svg><use href="#t-tools"/></svg></button>
          </div>
          <ul class="list elements">
            <li><label><input type="checkbox" class="check" checked><svg><use href="#e-edge"/></svg><svg><use href="#e-start"/></svg><svg><use href="#e-end"/></svg><svg><use href="#e-none"/></svg><span>1-Line</span></label></li>
            <li><label><input type="checkbox" class="check" checked><svg><use href="#e-edge"/></svg><svg><use href="#e-start"/></svg><svg><use href="#e-end"/></svg><svg><use href="#e-none"/></svg><span>2-Line</span></label></li>
            <li><label><input type="checkbox" class="check" checked><svg><use href="#e-edge"/></svg><svg><use href="#e-start"/></svg><svg><use href="#e-end"/></svg><svg><use href="#e-none"/></svg><span>3-Line</span></label></li>
            <li><label><input type="checkbox" class="check" checked><svg><use href="#e-edge"/></svg><svg><use href="#e-start"/></svg><svg><use href="#e-end"/></svg><svg><use href="#e-none"/></svg><span>4-Line</span></label></li>
            <li><label><input type="checkbox" class="check" checked><svg><use href="#e-none"/></svg><svg><use href="#e-point"/></svg><svg><use href="#e-none"/></svg><svg><use href="#e-none"/></svg><span>5-Point</span></label></li>
          </ul>
        </section>
      </div>
    </aside>

    <div class="stage">
      <div class="view">
        <svg class="sketch">
          <rect x="314" y="322" width="287" height="287" fill="#d6d6d6"/>
          <path d="M314 321.500h287.500V609" fill="none" stroke="#333"/>
          <path d="M314 182v139M314 750v94" stroke="#4fb58f" stroke-width="2"/>
          <path d="M314 321v288" stroke="#20c878" stroke-width="2"/>
          <path d="M0 609.500h740" stroke="#e0505a"/>
          <path d="M314 610v140" stroke="#e04048" stroke-width="2"/>
          <path d="M342.500 581v169M572.500 581v169M573 580.500h160M602 609.500h131M721.500 580v33M342 738.500h75M460 738.500h112" fill="none" stroke="#e41010"/>
          <path d="M342.500 350.500h230v230h-230z" fill="none" stroke="#14e614"/>
          <path d="M453 329.500h9M453 601.500h9M322 461v9M594 461v9" stroke="#d01414" stroke-width="2"/>
          <path d="M314 737.500l5-2v4zM342 737.500l-5-3v6zM343 738.500l5-3v6zM572 738.500l-5-3v6zM721.500 581l-3 5h6zM721.500 609l-3-5h6z" fill="#e01010"/>
          <g fill="#14e614"><circle cx="342.500" cy="350.500" r="2"/><circle cx="572.500" cy="350.500" r="2"/><circle cx="601.500" cy="609.500" r="2"/></g>
          <g fill="#1fae14"><circle cx="342.500" cy="580.500" r="2"/><circle cx="572.500" cy="580.500" r="2"/></g>
          <circle cx="314" cy="609.500" r="2" fill="#e01010"/>
          <g class="dim"><text x="320" y="741">10 mm</text><text x="420" y="742">80 mm</text><text transform="translate(724 610) rotate(-90)">10 mm</text></g>
        </svg>
        <svg class="navcube" viewBox="29 14 70 64">
          <g fill="#9a9ab8" stroke="#26264a" stroke-width=".8">
            <path d="M64 17l6 7H58zM64 82.500l6-7H58zM31 50l7-6v12zM97 50l-7-6v12z"/>
            <path d="M55 20c-6 1-11 5-14 9l-1-1v6l6-1-1-1c3-4 7-7 11-8zM73 20c6 1 11 5 14 9l1-1v6l-6-1 1-1c-3-4-7-7-11-8z"/>
            <circle cx="92.500" cy="21" r="3.500"/>
            <path d="M52 34h24l4 4v24l-4 4H52l-4-4V38z"/>
            <path d="M53 39h22v22H53zM48 40h5v-6M80 40h-5v-6M48 60h5v6M80 60h-5v6" fill="none" stroke-width=".5"/>
            <path d="M81 71l5-2 5 2v5l-5 3-5-3zM81 71l5 2 5-2M86 73v6"/>
          </g>
          <path d="M46.500 42v25" stroke="#1414d0"/><path d="M47 67.500h26" stroke="#c01428"/>
          <text x="64" y="52.500">FRONT</text>
        </svg>
        <svg class="axes" viewBox="50 20 45 45">
          <path d="M58 56V36" stroke="#4646b0"/><path d="M58 56h20" stroke="#b04058"/>
          <path d="M58 28l3.500 9h-7z" fill="#2020a8"/><path d="M86 56l-9 3.500v-7z" fill="#b81420"/>
          <circle cx="58" cy="56" r="2.500" fill="#128a30"/>
          <text x="58" y="27">z</text><text x="87" y="56">x</text>
        </svg>
      </div>
      <div class="doc-tabs">
        <button class="seg doc">Start page</button>
        <button class="seg on doc active"><svg viewBox="0 0 10 10"><path d="M1 1l8 8M9 1L1 9" stroke="#fff" stroke-width="1.200"/></svg>cubebit : 1*</button>
      </div>
    </div>
  </main>

  <footer class="status">
    <span>Valid, Internal name: Sketch001</span>
    <span class="dark nav">TinkerCAD</span>
    <span class="dark">490.65 mm x 293.49 mm</span>
  </footer>
</div>
</body>
</html>
```
FILE: styles.css
```css
* { box-sizing: border-box; }
html, body { height: 100%; }
body {
  margin: 0;
  background: #2f2f2f;
  color: #e4e4e4;
  font: 13px/16px Inter, "Liberation Sans", sans-serif;
}
button, select { font: inherit; color: inherit; border: 0; padding: 0; margin: 0; background: none; }
h1, h2, ul { margin: 0; padding: 0; font-weight: 400; }
svg { display: block; flex: none; }
.symbols { position: absolute; width: 0; height: 0; }

.app {
  display: flex;
  flex-direction: column;
  min-height: 100vh;
  border-top: 1px solid #666;
  border-right: 1px solid #444;
  border-left: 1px solid #444;
}

/* Toolbars */
.bar {
  display: flex;
  align-items: center;
  gap: 10px;
  height: 36px;
  padding-left: 6px;
  border-bottom: 2px solid #484848;
  overflow: hidden;
}
.bar:last-child { height: 35px; border-bottom-width: 1px; }
.grip {
  flex: none;
  width: 2px;
  height: 20px;
  margin-right: -2px;
  background: repeating-linear-gradient(#4e4e4e 0 2px, transparent 2px 6px);
}
.grip.gap { margin-left: 4px; }
.sep {
  flex: none;
  width: 1px;
  height: 32px;
  background: repeating-linear-gradient(#5c5c5c 0 1px, transparent 1px 3px);
}
.drop + .sep { margin-left: -4px; }
.tool { display: flex; flex: none; align-items: center; width: 28px; height: 28px; }
.tool svg { width: 28px; height: 28px; }
.tool.drop { width: 38px; }
.tool .chev { width: 9px; height: 9px; margin-top: 10px; }
.tool.dim .chev { opacity: .4; }
.tool.tight { margin-left: -2px; }
.tool.lead { margin-left: 3px; margin-right: -3px; }
.workbench {
  display: flex;
  align-items: center;
  gap: 3px;
  width: 184px;
  height: 21px;
  padding: 0 3px 0 9px;
  border-radius: 5px;
  background: #656565;
}
.workbench svg { width: 16px; height: 16px; }
.workbench select { flex: 1; appearance: none; outline: 0; }
.workbench .updown { border-radius: 4px; background: #0a74e6; }
.bar-end { display: flex; align-items: center; gap: 9px; margin-left: auto; margin-right: 2px; }
.more svg { width: 16px; height: 14px; }

/* Work area */
.work { display: flex; flex: 1; }
.dock {
  display: flex;
  flex-direction: column;
  width: 268px;
  border-right: 2px solid #77777c;
  background: #333;
}
.dock-head {
  display: flex;
  align-items: center;
  height: 22px;
  border-bottom: 2px solid #a6a6a6;
  background: linear-gradient(#3c3c3c, #6a6a6a);
}
.dock-head h1 { flex: 1; padding: 2px 4px 0 3px; text-align: center; font-size: 12px; line-height: 16px; color: #eee; }
.float { width: 14px; height: 14px; margin-left: 1px; border-radius: 7px; background: #2c2c2c; }
.float svg { width: 12px; height: 12px; margin: 1px; }
.dock-tabs {
  display: flex;
  justify-content: center;
  height: 27px;
  padding: 0 2px 6px 0;
  background: linear-gradient(#222 0 1px, #2e2e2e 1px 10px, #4a4a4a 10px 11px, #363636 11px);
}
.seg {
  display: flex;
  align-items: center;
  justify-content: center;
  gap: 6px;
  width: 59px;
  height: 21px;
  padding-right: 2px;
  border-radius: 5px 0 0 5px;
  background: #646464;
  color: #eee;
}
.seg.on { width: 101px; border-radius: 0 5px 5px 0; background: linear-gradient(#0a84ff, #0670dc); color: #fff; }
.seg.tasks { justify-content: flex-start; padding-left: 12px; }
.seg svg { width: 16px; height: 16px; }
.panel {
  flex: 1;
  margin: 0 3px 3px;
  padding: 20px 24px 0 14px;
  border: 1px solid #f4f4f4;
  background: #d8dfe7;
  color: #000;
}
.close {
  display: block;
  width: 64px;
  height: 21px;
  margin: 0 0 25px 84px;
  border-radius: 5px;
  background: #e6eaf1;
  box-shadow: 0 0 1px #8a8f96, 0 1px 1px #b5bac2;
}
.panel h2 {
  display: flex;
  align-items: center;
  gap: 3px;
  height: 16px;
  margin-bottom: 22px;
  font-size: 11px;
  font-weight: 600;
  color: #7482a8;
}
.panel h2 svg { width: 14px; height: 16px; }
.row { display: flex; align-items: center; height: 26px; margin-left: 22px; padding-right: 7px; }
.row > .check { margin: 0 6px 0 2px; }
.state { flex: 1; color: #008a10; }
.flat {
  position: relative;
  display: flex;
  align-items: center;
  justify-content: center;
  height: 26px;
  border: 1px solid #e2e7ef;
  background: #dce1ea;
  font-size: 11px;
}
.flat svg { width: 16px; height: 16px; }
.flat.menu::after {
  content: "";
  position: absolute;
  right: -6px;
  bottom: 2px;
  width: 4px;
  height: 4px;
  border: solid #fff;
  border-width: 0 1px 1px 0;
  transform: rotate(45deg);
}
.flat.wide { flex: 1; margin-right: 17px; }
.flat.sq { width: 28px; }
.flat.eye { width: 26px; margin-right: 10px; }
.panel section + section { margin-top: 30px; }
.panel section + section h2 { margin-bottom: 25px; }
.check {
  appearance: none;
  position: relative;
  flex: none;
  width: 14px;
  height: 14px;
  margin: 0;
  border-radius: 4px;
  background: linear-gradient(#1483f2, #0a6cdc);
}
.check:checked::after {
  content: "";
  position: absolute;
  left: 5px;
  top: 1px;
  width: 5px;
  height: 10px;
  border: solid #fff;
  border-width: 0 2px 2px 0;
  transform: rotate(38deg);
}
.list {
  width: 198px;
  height: 192px;
  margin: 14px 0 0 22px;
  overflow: hidden;
  list-style: none;
  background: #1e1e1e;
  color: #e4e4e4;
}
.list label { display: flex; align-items: center; }
.constraints { border: 1px solid #0a0a0a; font-size: 12px; }
.constraints label { height: 22px; padding-left: 7px; }
.constraints svg { width: 18px; height: 18px; margin: 0 5px 0 12px; }
.elements { border: 2px solid #000; border-left-color: #8a8a8a; border-top-color: #555; }
.elements label { height: 17px; gap: 3px; }
.elements svg { width: 14px; height: 14px; }
.elements .check { margin-right: 6px; }
.elements span { margin-left: 2px; }

.stage { display: flex; flex: 1; flex-direction: column; min-width: 0; }
.view { position: relative; flex: 1; overflow: hidden; background: linear-gradient(#333366, #9797ad); }
.sketch { position: absolute; inset: 0; width: 100%; height: 100%; }
.dim { font: 12px "Liberation Sans", sans-serif; fill: #d81414; stroke: #d81414; stroke-width: .3px; }
.navcube { position: absolute; top: 0; right: 0; width: 70px; height: 64px; overflow: visible; }
.navcube text { font: 7px "Liberation Sans", sans-serif; text-anchor: middle; fill: #111; }
.axes { position: absolute; right: 4px; bottom: 33px; width: 45px; height: 45px; }
.axes text { font: 6px "Liberation Sans", sans-serif; fill: #222; }
.doc-tabs {
  display: flex;
  justify-content: center;
  height: 20px;
  background: linear-gradient(#3a3a3a 0 10px, #4c4c4c 10px 11px, #333 11px);
}
.seg.doc { width: 107px; height: 20px; }
.seg.active { width: 112px; padding-right: 14px; }
.seg.active svg { width: 9px; height: 9px; }

.status {
  display: flex;
  align-items: center;
  height: 42px;
  padding: 0 34px 2px 1px;
  border-top: 2px solid #4c4c4c;
  border-bottom: 1px solid #555;
}
.status .nav { margin-left: auto; margin-right: 58px; }
.dark { color: #080808; }
```
